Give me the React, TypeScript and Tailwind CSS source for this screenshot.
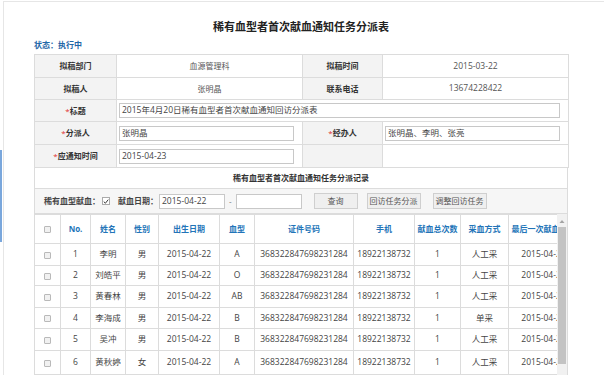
import React from "react";

const rows = [
  ["1", "李明", "男", "2015-04-22", "A", "368322847698231284", "18922138732", "1", "人工采", "2015-04-22"],
  ["2", "刘皓平", "男", "2015-04-22", "O", "368322847698231284", "18922138732", "1", "人工采", "2015-04-22"],
  ["3", "黄春林", "男", "2015-04-22", "AB", "368322847698231284", "18922138732", "1", "人工采", "2015-04-22"],
  ["4", "李海成", "男", "2015-04-22", "B", "368322847698231284", "18922138732", "1", "单采", "2015-04-22"],
  ["5", "吴冲", "男", "2015-04-22", "B", "368322847698231284", "18922138732", "1", "人工采", "2015-04-22"],
  ["6", "黄秋婷", "女", "2015-04-22", "A", "368322847698231284", "18922138732", "1", "人工采", "2015-04-22"],
  ["7", "张亮", "男", "2015-04-22", "A", "368322847698231284", "18922138732", "1", "人工采", "2015-04-22"],
];
const rowHeights = ["h-[22px]", "h-[20px]", "h-[22px]", "h-[21px]", "h-[22px]", "h-[24px]", "h-[22px]"];

const headers = ["No.", "姓名", "性别", "出生日期", "血型", "证件号码", "手机", "献血总次数", "采血方式", "最后一次献血时间"];
const colWidths = ["w-[26px]", "w-[30px]", "w-[35px]", "w-[33px]", "w-[61px]", "w-[35px]", "w-[99px]", "w-[61px]", "w-[46px]", "w-[48px]", "w-[70px]"];

function Box() {
  return <span className="inline-block w-[7px] h-[7px] border border-[#b9b9b9] bg-[#f1f1f1] rounded-[1px] align-middle" />;
}

function Req({ children }: { children: React.ReactNode }) {
  return (
    <span>
      <span className="text-[#e03030] font-normal">*</span>
      {children}
    </span>
  );
}

function Field({ value, w }: { value: string; w: string }) {
  return (
    <div className={`${w} h-[15px] border border-[#c8c8c8] bg-white pl-[2px] flex items-center text-[#444] text-[8.5px]`}>
      {value}
    </div>
  );
}

const label = "bg-[#f3f3f3] border border-[#dcdcdc] text-center text-[#333] font-bold";
const cell = "border border-[#dcdcdc] bg-white";

export default function App() {
  return (
    <div className="w-[604px] h-[375px] overflow-hidden bg-white flex font-['Open_Sans','Noto_Sans_CJK_SC',sans-serif] text-[8px]">
      <div className="w-[3px] shrink-0 pt-[150px]">
        <div className="w-[2px] h-[92px] bg-[#7aa7dc]" />
      </div>
      <div className="flex-1 mt-[1px] border-t border-l border-[#e6e6e6] pl-[30px]">
        <div className="w-[534px]">
          <h1 className="pt-[17px] h-[34px] leading-[16px] text-center text-[11px] font-bold text-[#222]">
            稀有血型者首次献血通知任务分派表
          </h1>
          <div className="h-[18px] leading-[12px] pt-[3px] text-[#1f67a8] font-bold">状态：执行中</div>

          <table className="table-fixed border-collapse w-[534px]">
            <colgroup>
              <col className="w-[82px]" />
              <col className="w-[186px]" />
              <col className="w-[80px]" />
              <col className="w-[186px]" />
            </colgroup>
            <tbody>
              <tr className="h-[23px]">
                <td className={label}>拟稿部门</td>
                <td className={`${cell} text-center text-[#555]`}>血源管理科</td>
                <td className={label}>拟稿时间</td>
                <td className={`${cell} text-center text-[#555] text-[8.5px]`}>2015-03-22</td>
              </tr>
              <tr className="h-[22px]">
                <td className={label}>拟稿人</td>
                <td className={`${cell} text-center text-[#555]`}>张明晶</td>
                <td className={label}>联系电话</td>
                <td className={`${cell} text-center text-[#555] text-[8.5px]`}>13674228422</td>
              </tr>
              <tr className="h-[22px]">
                <td className={label}><Req>标题</Req></td>
                <td className={`${cell} pl-[2px]`} colSpan={3}>
                  <Field w="w-[441px]" value="2015年4月20日稀有血型者首次献血通知回访分派表" />
                </td>
              </tr>
              <tr className="h-[23px]">
                <td className={label}><Req>分派人</Req></td>
                <td className={`${cell} pl-[2px]`}>
                  <Field w="w-[175px]" value="张明晶" />
                </td>
                <td className={label}><Req>经办人</Req></td>
                <td className={`${cell} pl-[2px]`}>
                  <Field w="w-[175px]" value="张明晶、李明、张亮" />
                </td>
              </tr>
              <tr className="h-[23px]">
                <td className={label}><Req>应通知时间</Req></td>
                <td className={`${cell} pl-[2px]`}>
                  <Field w="w-[175px]" value="2015-04-23" />
                </td>
                <td className={label}></td>
                <td className={cell}></td>
              </tr>
            </tbody>
          </table>

          <div className="h-[21px] border-x border-b border-[#dcdcdc] flex items-center justify-center font-bold text-[#333]">
            稀有血型者首次献血通知任务分派记录
          </div>

          <div className="h-[25px] border-x border-b border-[#dcdcdc] bg-[#f6f6f6] flex items-center pl-[9px] text-[#444]">
            <span className="font-bold">稀有血型献血：</span>
            <span className="ml-[2px] w-[8px] h-[8px] border border-[#aaa] bg-white flex items-center justify-center">
              <svg width="7" height="7" viewBox="0 0 8 8">
                <path d="M1 4.2 L3.2 6.3 L7 1.5" fill="none" stroke="#333" strokeWidth="1.3" />
              </svg>
            </span>
            <span className="ml-[8px] font-bold">献血日期：</span>
            <Field w="w-[66px] ml-[1px]" value="2015-04-22" />
            <span className="mx-[4px] text-[#666]">-</span>
            <Field w="w-[66px]" value="" />
            <button className="ml-[12px] w-[44px] h-[16px] border border-[#cfcfcf] bg-[#efefef] text-[#555]">查询</button>
            <button className="ml-[9px] w-[54px] h-[16px] border border-[#cfcfcf] bg-[#efefef] text-[#555]">回访任务分派</button>
            <button className="ml-[12px] w-[54px] h-[16px] border border-[#cfcfcf] bg-[#efefef] text-[#555]">调整回访任务</button>
          </div>

          <div className="flex border-r border-[#dcdcdc]">
            <div className="w-[523px] overflow-hidden">
              <table className="table-fixed border-collapse w-[544px]">
                <colgroup>
                  {colWidths.map((w, i) => (
                    <col key={i} className={w} />
                  ))}
                </colgroup>
                <thead>
                  <tr className="h-[29px]">
                    <th className="border border-[#dcdcdc] font-normal"><Box /></th>
                    {headers.map((h) => (
                      <th key={h} className="border border-[#dcdcdc] text-[#2274b8] font-bold whitespace-nowrap overflow-hidden">
                        {h}
                      </th>
                    ))}
                  </tr>
                </thead>
                <tbody>
                  {rows.map((r, i) => (
                    <tr key={i} className={rowHeights[i]}>
                      <td className="border border-[#dcdcdc] text-center"><Box /></td>
                      {r.map((v, j) => (
                        <td key={j} className="border border-[#dcdcdc] text-center text-[#444] text-[8.5px] whitespace-nowrap overflow-hidden">
                          {v}
                        </td>
                      ))}
                    </tr>
                  ))}
                </tbody>
              </table>
            </div>
            <div className="w-[10px] bg-[#f1f1f1] pt-[5px] flex flex-col items-center">
              <svg width="6" height="5" viewBox="0 0 6 5">
                <path d="M3 1 L5.5 4 L0.5 4 Z" fill="#a3a3a3" />
              </svg>
              <div className="mt-[3px] w-[8px] h-[137px] bg-[#c3c3c3]" />
            </div>
          </div>
        </div>
      </div>
    </div>
  );
}
